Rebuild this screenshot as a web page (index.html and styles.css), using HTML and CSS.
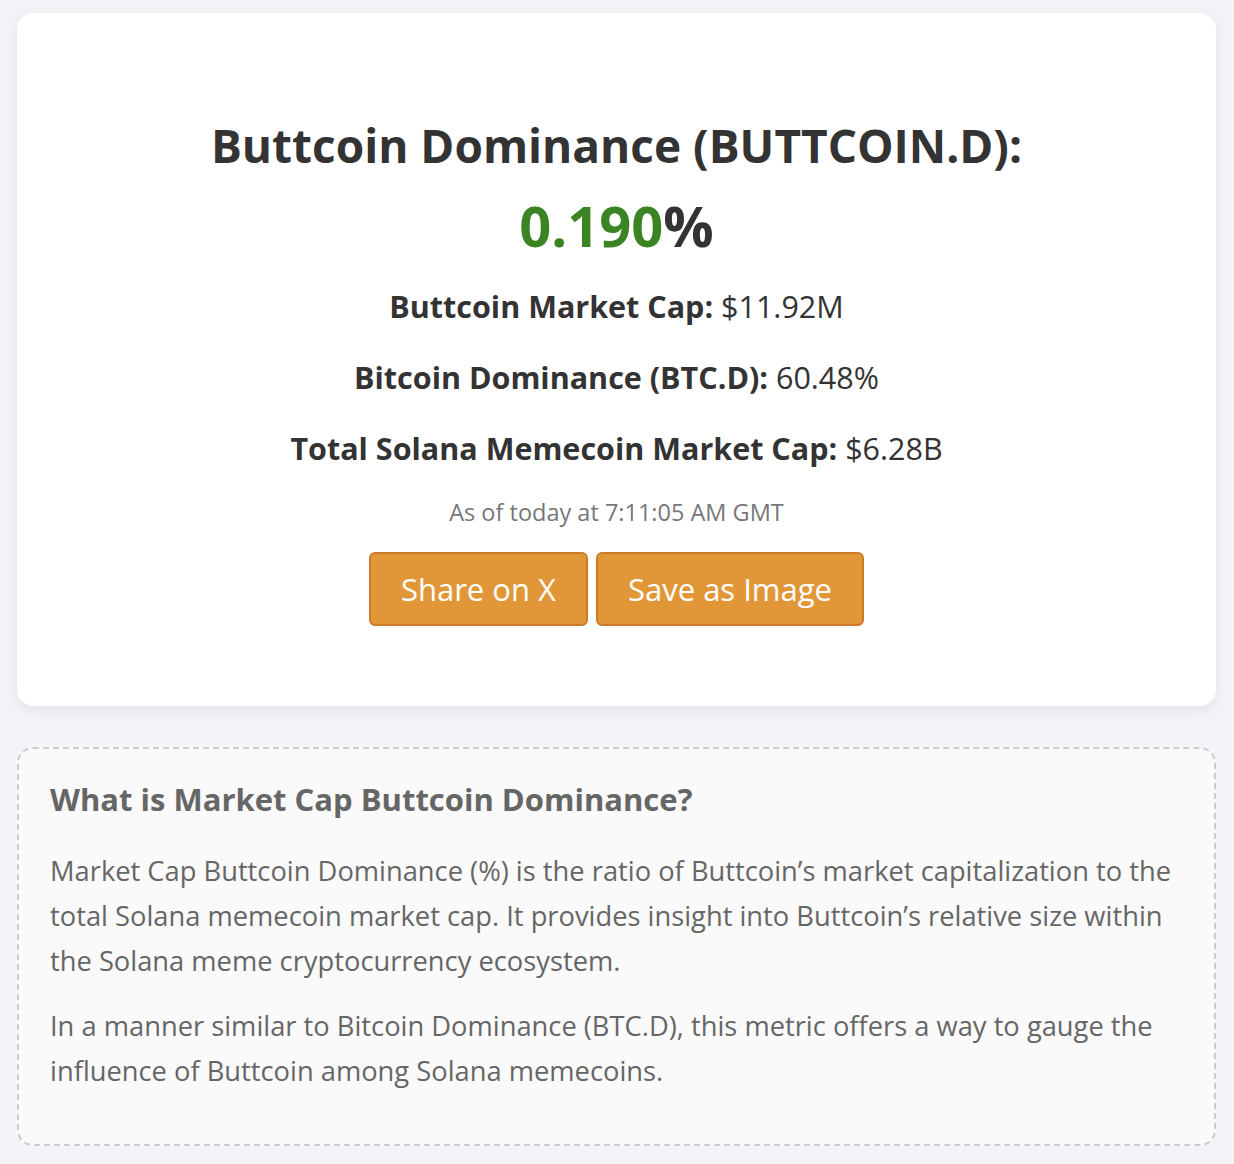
FILE: index.html
```html
<!DOCTYPE html>
<html lang="en">
<head>
    <meta charset="UTF-8">
    <meta name="viewport" content="width=device-width, initial-scale=1.0">
    <title>Buttcoin Dominance</title>
    <link rel="stylesheet" href="styles.css">
</head>
<body>
    <div class="container">
        <div class="card" id="capture">
            <h1>Buttcoin Dominance (BUTTCOIN.D):</h1>
            <div class="dominance"><span class="value">0.190</span>%</div>
            <p class="stat"><strong>Buttcoin Market Cap:</strong> $11.92M</p>
            <p class="stat"><strong>Bitcoin Dominance (BTC.D):</strong> 60.48%</p>
            <p class="stat"><strong>Total Solana Memecoin Market Cap:</strong> $6.28B</p>
            <p class="timestamp">As of today at 7:11:05 AM GMT</p>
            <div class="actions">
                <button class="btn">Share on X</button>
                <button class="btn">Save as Image</button>
            </div>
        </div>

        <div class="info">
            <h2>What is Market Cap Buttcoin Dominance?</h2>
            <p>Market Cap Buttcoin Dominance (%) is the ratio of Buttcoin’s market capitalization to the total Solana memecoin market cap. It provides insight into Buttcoin’s relative size within the Solana meme cryptocurrency ecosystem.</p>
            <p>In a manner similar to Bitcoin Dominance (BTC.D), this metric offers a way to gauge the influence of Buttcoin among Solana memecoins.</p>
        </div>
    </div>
</body>
</html>
```

FILE: styles.css
```css
body {
    font-family: "Open Sans", "Noto Sans", Arial, sans-serif;
    margin: 0;
    padding: 13px 18px 20px 17px;
    background-color: #f4f4f8;
    color: #333;
}
.container {
    display: flex;
    flex-direction: column;
    gap: 41px;
}
.card {
    background-color: #fff;
    border-radius: 16px;
    box-shadow: 0 4px 14px rgba(0, 0, 0, 0.08);
    padding: 100px 40px 80px;
    text-align: center;
}
h1 {
    margin: 0;
    font-size: 46px;
    line-height: 64px;
    font-weight: 700;
    color: #333;
}
.dominance {
    margin-top: 13px;
    font-size: 56px;
    line-height: 70px;
    font-weight: 700;
    color: #333;
}
.dominance .value {
    color: #3a8424;
}
.stat {
    margin: 22px 0 0;
    font-size: 30.5px;
    line-height: 49px;
}
.timestamp {
    margin: 24px 0 0;
    font-size: 23.5px;
    line-height: 30px;
    color: #777;
}
.actions {
    margin-top: 25px;
    display: flex;
    justify-content: center;
    gap: 8px;
}
.btn {
    font-family: inherit;
    font-size: 31px;
    color: #fff;
    background-color: #e19738;
    border: 2px solid #c97b2a;
    border-radius: 6px;
    height: 74px;
    padding: 0 30px;
    cursor: pointer;
}
.btn:hover {
    background-color: #d08530;
}
.info {
    background-color: #fafafa;
    border: 2px dashed #cccccc;
    border-radius: 16px;
    padding: 30px 31px 51px;
    color: #666;
}
.info h2 {
    margin: 0 0 29px;
    font-size: 31px;
    line-height: 40px;
    color: #666;
}
.info p {
    margin: 0 0 20px;
    font-size: 27.3px;
    line-height: 45px;
}
.info p:last-child {
    margin-bottom: 0;
}
```
